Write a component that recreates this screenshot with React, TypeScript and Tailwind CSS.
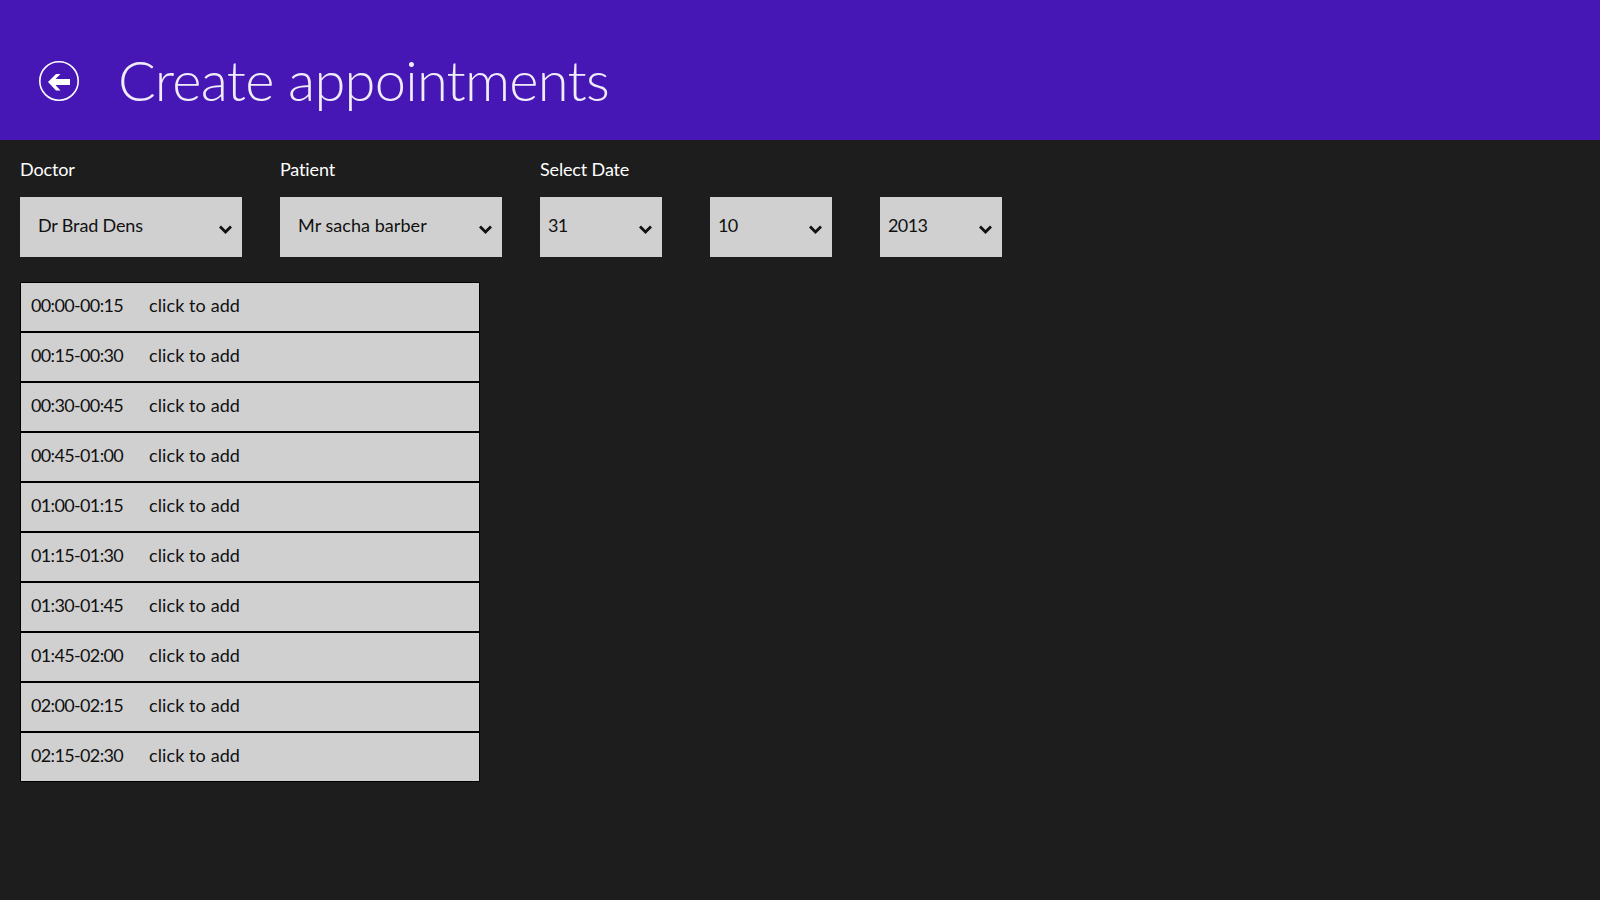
import React from "react";

const slots = ["00:00-00:15","00:15-00:30","00:30-00:45","00:45-01:00","01:00-01:15","01:15-01:30","01:30-01:45","01:45-02:00","02:00-02:15","02:15-02:30"];

function Chevron() {
  return (
    <svg width="13" height="9" viewBox="0 0 13 9" className="shrink-0">
      <path d="M1 1.5 L6.5 7 L12 1.5" fill="none" stroke="#111" strokeWidth="2.8" />
    </svg>
  );
}

function Select({ value, w, pl, track }: { value: string; w: string; pl: string; track: string }) {
  return (
    <div className={`flex h-[60px] items-center justify-between bg-[#d0d0d0] pr-[10px] text-[#111] ${w} ${pl}`}>
      <span className={`-mt-[4px] text-[18px] leading-[58px] ${track}`}>{value}</span>
      <div className="mt-[5px]"><Chevron /></div>
    </div>
  );
}

export default function App() {
  return (
    <div className="flex h-[900px] w-[1600px] flex-col overflow-hidden bg-[#1d1d1d] font-['Lato',sans-serif]">
      <header className="flex h-[140px] items-center bg-[#4617b4] pl-[39px] pt-[22px] text-white">
        <svg width="40" height="40" viewBox="0 0 40 40" className="mr-[39px] shrink-0">
          <circle cx="20" cy="20" r="19.2" fill="none" stroke="#fff" strokeWidth="1.6" />
          <path d="M9 21 L17 13 L21.5 13 L16.5 18 L31 18 L31 24 L16.5 24 L21.5 29.5 L17 29.5 Z" fill="#fff" />
        </svg>
        <h1 className="mt-[-2px] whitespace-nowrap text-[56px] font-light leading-none tracking-[-0.75px] text-[#f0ecf9]">Create appointments</h1>
      </header>
      <main className="flex flex-col px-[20px] pt-[17px]">
        <div className="flex items-start">
          <div className="mr-[38px] flex w-[222px] flex-col">
            <label className="mb-[9px] h-[31px] text-[18px] leading-[24px] tracking-[-0.15px] text-white">Doctor</label>
            <Select value="Dr Brad Dens" w="w-[222px]" pl="pl-[18px]" track="tracking-[-0.15px]" />
          </div>
          <div className="mr-[38px] flex w-[222px] flex-col">
            <label className="mb-[9px] h-[31px] text-[18px] leading-[24px] tracking-[-0.15px] text-white">Patient</label>
            <Select value="Mr sacha barber" w="w-[222px]" pl="pl-[18px]" track="tracking-[0.05px]" />
          </div>
          <div className="flex flex-col">
            <label className="mb-[9px] h-[31px] text-[18px] leading-[24px] tracking-[-0.15px] text-white">Select Date</label>
            <div className="flex gap-[48px]">
              <Select value="31" w="w-[122px]" pl="pl-[8px]" track="tracking-[-0.6px]" />
              <Select value="10" w="w-[122px]" pl="pl-[8px]" track="tracking-[-0.6px]" />
              <Select value="2013" w="w-[122px]" pl="pl-[8px]" track="tracking-[-0.6px]" />
            </div>
          </div>
        </div>
        <div className="mt-[25px] flex w-[460px] flex-col">
          {slots.map((s) => (
            <div key={s} className="flex h-[50px] items-center border border-black bg-[#d0d0d0] pb-[4px] pl-[10px] text-[18px] text-[#111]">
              <span className="w-[118px] tracking-[-0.65px]">{s}</span>
              <span className="tracking-[0.1px]">click to add</span>
            </div>
          ))}
        </div>
      </main>
    </div>
  );
}
